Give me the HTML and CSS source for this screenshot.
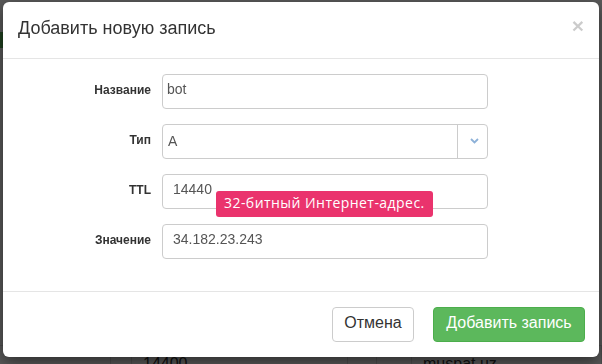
FILE: index.html
```html
<!DOCTYPE html>
<html lang="ru">
<head>
  <meta charset="UTF-8">
  <meta name="viewport" content="width=device-width, initial-scale=1.0">
  <title>DNS записи</title>
  <link rel="stylesheet" href="styles.css">
</head>
<body>
  <!-- Страница под модальным окном -->
  <div class="page">
    <div class="toolbar">
      <span class="btn-bg"></span>
    </div>
    <div class="records">
      <div class="rec-row">
        <span class="cell"></span>
        <span class="cell"></span>
        <span class="cell">14400</span>
        <span class="cell"></span>
        <span class="cell"></span>
        <span class="cell">muspat.uz</span>
      </div>
    </div>
  </div>

  <div class="backdrop"></div>

  <!-- Модальное окно -->
  <div class="modal">
    <div class="modal-header">
      <h4 class="modal-title">Добавить новую запись</h4>
      <button type="button" class="close">&times;</button>
    </div>

    <div class="modal-body">
      <form class="record-form">
        <div class="form-row">
          <label for="name">Название</label>
          <input type="text" id="name" class="field field-tight" value="bot">
        </div>

        <div class="form-row">
          <label>Тип</label>
          <div class="select">
            <span class="select-value">A</span>
            <span class="select-arrow">
              <svg width="9" height="6" viewBox="0 0 9 6"><path d="M1 1l3.5 3.5L8 1" fill="none" stroke="#8db1d8" stroke-width="1.8"/></svg>
            </span>
          </div>
        </div>

        <div class="form-row">
          <label for="ttl">TTL</label>
          <div class="field-wrap">
            <input type="text" id="ttl" class="field" value="14440">
            <div class="tooltip">32-битный Интернет-адрес.</div>
          </div>
        </div>

        <div class="form-row">
          <label for="value">Значение</label>
          <input type="text" id="value" class="field" value="34.182.23.243">
        </div>
      </form>
    </div>

    <div class="modal-footer">
      <button type="button" class="btn btn-default">Отмена</button>
      <button type="button" class="btn btn-success">Добавить запись</button>
    </div>
  </div>
</body>
</html>
```

FILE: styles.css
```css
* {
  margin: 0;
  padding: 0;
  box-sizing: border-box;
}

html, body {
  height: 100%;
}

body {
  font-family: "Liberation Sans", Arial, sans-serif;
  background: #fff;
  color: #333;
  overflow: hidden;
}

/* Страница за затемнением */
.page {
  height: 100%;
  padding-top: 32px;
  overflow: hidden;
}

.btn-bg {
  display: block;
  width: 120px;
  height: 16px;
  background: #5cb85c;
}

.records {
  margin-top: 297px;
}

.rec-row {
  display: grid;
  grid-template-columns: 111px 21px 216px 29px 35px 1fr;
  height: 19px;
  border-top: 1px solid #ddd;
}

.cell {
  border-right: 1px solid #ddd;
  padding: 9px 0 0 11px;
  font-size: 16px;
  line-height: 18px;
  color: #333;
  overflow: hidden;
}

.backdrop {
  position: fixed;
  top: 0;
  left: 0;
  right: 0;
  bottom: 0;
  background: rgba(0, 0, 0, 0.65);
}

/* Модальное окно */
.modal {
  position: fixed;
  top: 2px;
  left: 3px;
  width: 596px;
  background: #fff;
  border-radius: 6px;
  box-shadow: 0 5px 15px rgba(0, 0, 0, 0.5);
}

.modal-header {
  display: flex;
  justify-content: space-between;
  align-items: flex-start;
  padding: 13px 15px 17px;
  border-bottom: 1px solid #e5e5e5;
}

.modal-title {
  font-size: 18px;
  font-weight: normal;
  line-height: 26px;
  color: #333;
}

.close {
  background: none;
  border: none;
  font-family: "Liberation Sans", Arial, sans-serif;
  font-size: 21px;
  font-weight: bold;
  line-height: 1;
  color: #000;
  opacity: 0.2;
  margin-top: 0;
  cursor: pointer;
}

.modal-body {
  padding: 15px 15px 17px;
}

.form-row {
  display: grid;
  grid-template-columns: 133px 326px;
  column-gap: 11px;
  align-items: center;
  margin-bottom: 15px;
}

.form-row label {
  text-align: right;
  font-size: 12px;
  font-weight: bold;
  color: #333;
  padding-bottom: 3px;
}

.field {
  display: block;
  width: 326px;
  height: 35px;
  padding: 0 10px 5px;
  border: 1px solid #ccc;
  border-radius: 4px;
  font-family: "Liberation Sans", Arial, sans-serif;
  font-size: 14px;
  color: #555;
  outline: none;
}

.field-tight {
  padding-left: 4px;
}

.select {
  display: flex;
  height: 35px;
  border: 1px solid #ccc;
  border-radius: 4px;
}

.select-value {
  flex: 1;
  padding: 8px 5px 0;
  font-size: 14px;
  color: #555;
}

.select-arrow {
  width: 30px;
  border-left: 1px solid #ccc;
  display: flex;
  align-items: center;
  justify-content: center;
  padding: 0 0 2px 3px;
}

.field-wrap {
  position: relative;
}

.tooltip {
  position: absolute;
  top: 17px;
  left: 54px;
  width: 217px;
  height: 26px;
  padding: 0 0 3px 8px;
  background: #ea336d;
  border-radius: 3px;
  color: #fff;
  font-family: "Open Sans", sans-serif;
  font-size: 14px;
  letter-spacing: 0.45px;
  line-height: 23px;
  white-space: nowrap;
}

.modal-footer {
  display: flex;
  justify-content: flex-end;
  gap: 19px;
  padding: 15px 14px 15px 15px;
  border-top: 1px solid #e5e5e5;
}

.btn {
  height: 35px;
  padding: 0 0 3px;
  border: 1px solid #ccc;
  border-radius: 4px;
  font-family: "Liberation Sans", Arial, sans-serif;
  font-size: 16px;
  cursor: pointer;
}

.btn-default {
  width: 82px;
  background: #fff;
  color: #333;
}

.btn-success {
  width: 152px;
  background: #5cb85c;
  border-color: #4cae4c;
  color: #fff;
}
```
